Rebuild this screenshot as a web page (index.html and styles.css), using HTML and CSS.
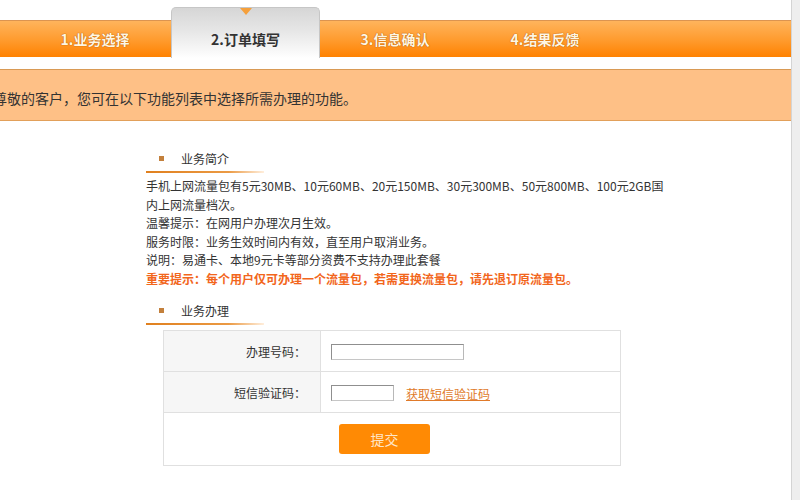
FILE: index.html
```html
<!DOCTYPE html>
<html lang="zh-CN">
<head>
<meta charset="utf-8">
<title>订单填写</title>
<link rel="stylesheet" href="styles.css">
</head>
<body>
<div class="page">
  <div class="main">
    <div class="nav">
      <div class="tab">1.业务选择</div>
      <div class="tab active"><span class="arrow"></span><span class="label">2.订单填写</span></div>
      <div class="tab">3.信息确认</div>
      <div class="tab">4.结果反馈</div>
    </div>
    <div class="notice">尊敬的客户，您可在以下功能列表中选择所需办理的功能。</div>
    <div class="content">
      <div class="sec-head"><span class="dot"></span><span class="sec-title">业务简介</span></div>
      <div class="sec-line"></div>
      <div class="intro">
        <p class="first">手机上网流量包有5元30MB、10元60MB、20元150MB、30元300MB、50元800MB、100元2GB国内上网流量档次。</p>
        <p>温馨提示：在网用户办理次月生效。</p>
        <p>服务时限：业务生效时间内有效，直至用户取消业务。</p>
        <p>说明：易通卡、本地9元卡等部分资费不支持办理此套餐</p>
        <p class="important">重要提示：每个用户仅可办理一个流量包，若需更换流量包，请先退订原流量包。</p>
      </div>
      <div class="sec-head second"><span class="dot"></span><span class="sec-title">业务办理</span></div>
      <div class="sec-line"></div>
      <table class="form">
        <tr>
          <th>办理号码：</th>
          <td><input class="inp long" type="text"></td>
        </tr>
        <tr>
          <th>短信验证码：</th>
          <td><input class="inp short" type="text"><a class="sms" href="#">获取短信验证码</a></td>
        </tr>
        <tr>
          <td class="submit-cell" colspan="2"><button class="submit" type="button">提交</button></td>
        </tr>
      </table>
    </div>
  </div>
  <div class="scroll"></div>
</div>
</body>
</html>
```
FILE: styles.css
```css
html, body {
  margin: 0;
  padding: 0;
  background: #fff;
}
body {
  font-family: "Noto Sans CJK SC", "Noto Sans", sans-serif;
  font-size: 12px;
  color: #333;
  overflow: hidden;
}
.page {
  display: flex;
  width: 800px;
  height: 500px;
}
.main {
  width: 791px;
  overflow: hidden;
}
.scroll {
  width: 8px;
  border-left: 1px solid #d4d4d4;
  background: #eeeeee;
}

/* nav */
.nav {
  display: flex;
  height: 51px;
  padding: 7px 0 0 20px;
  background:
    linear-gradient(#dc9450, #dc9450) 0 20px / 100% 1px no-repeat,
    linear-gradient(#ffb45c, #ff9a2c 55%, #ff8200) 0 21px / 100% 36px no-repeat;
}
.tab {
  width: 150px;
  box-sizing: border-box;
  text-align: center;
  padding-top: 24px;
  font-size: 14px;
  font-weight: bold;
  color: #fff6e2;
  text-shadow: 0 0 1px #b85c00, 0 0 1px #b85c00;
  line-height: 16px;
}
.tab.active {
  display: flex;
  flex-direction: column;
  align-items: center;
  padding-top: 0;
  margin-left: 1px;
  width: 149px;
  border: 1px solid #c6c6c6;
  border-bottom: none;
  border-radius: 5px 5px 0 0;
  background: linear-gradient(#d6d6d6, #e6e6e6 45%, #fafafa 90%, #fff);
  color: #333;
  text-shadow: none;
}
.arrow {
  width: 0;
  height: 0;
  border-left: 6px solid transparent;
  border-right: 6px solid transparent;
  border-top: 7px solid #f5a03c;
}
.tab.active .label {
  margin-top: 16px;
}

/* notice */
.notice {
  margin-top: 11px;
  height: 52px;
  box-sizing: border-box;
  border-top: 1px solid #d99a55;
  border-bottom: 1px solid #e2a05a;
  background: #fec086;
  font-size: 14px;
  line-height: 56px;
  text-indent: -7px;
  color: #333;
  white-space: nowrap;
}

/* content */
.content {
  padding-left: 146px;
  padding-top: 27px;
}
.sec-head {
  display: flex;
  align-items: center;
  height: 20px;
  padding-left: 13px;
}
.sec-head.second {
  margin-top: 12px;
}
.dot {
  width: 5px;
  height: 5px;
  background: #c3803c;
}
.sec-title {
  margin-left: 17px;
  color: #333;
}
.sec-line {
  width: 118px;
  height: 2px;
  margin-top: 3px;
  background: linear-gradient(90deg, #e0801e, #eb9a44 70%, rgba(255, 200, 140, 0.3));
}
.intro {
  width: 560px;
  margin-top: 4px;
  line-height: 18.5px;
}
.intro p {
  margin: 0;
}
.intro p.first {
  width: 524px;
}
.important {
  color: #f2661c;
  font-weight: bold;
}

/* form */
.form {
  margin: 5px 0 0 17px;
  width: 458px;
  border-collapse: collapse;
}
.form th, .form td {
  border: 1px solid #e0e0e0;
  padding: 0;
}
.form th {
  width: 142px;
  height: 40px;
  background: #f6f6f6;
  text-align: right;
  font-weight: normal;
  padding-right: 14px;
  color: #333;
}
.form td {
  padding-left: 10px;
}
.inp {
  height: 16px;
  box-sizing: border-box;
  border: 1px solid #8f8f8f;
  border-right-color: #b8b8b8;
  border-bottom-color: #c6c6c6;
  padding: 0 2px;
  vertical-align: middle;
}
.inp.long { width: 133px; }
.inp.short { width: 63px; }
.sms {
  margin-left: 12px;
  color: #e07a2a;
  vertical-align: middle;
}
.form td.submit-cell {
  height: 52px;
  padding-left: 175px;
}
.submit {
  display: block;
  width: 91px;
  height: 30px;
  border: none;
  border-radius: 3px;
  background: #ff8a04;
  color: #ffe6c8;
  font-family: "Noto Sans CJK SC", sans-serif;
  font-size: 14px;
  padding: 0;
}
```
